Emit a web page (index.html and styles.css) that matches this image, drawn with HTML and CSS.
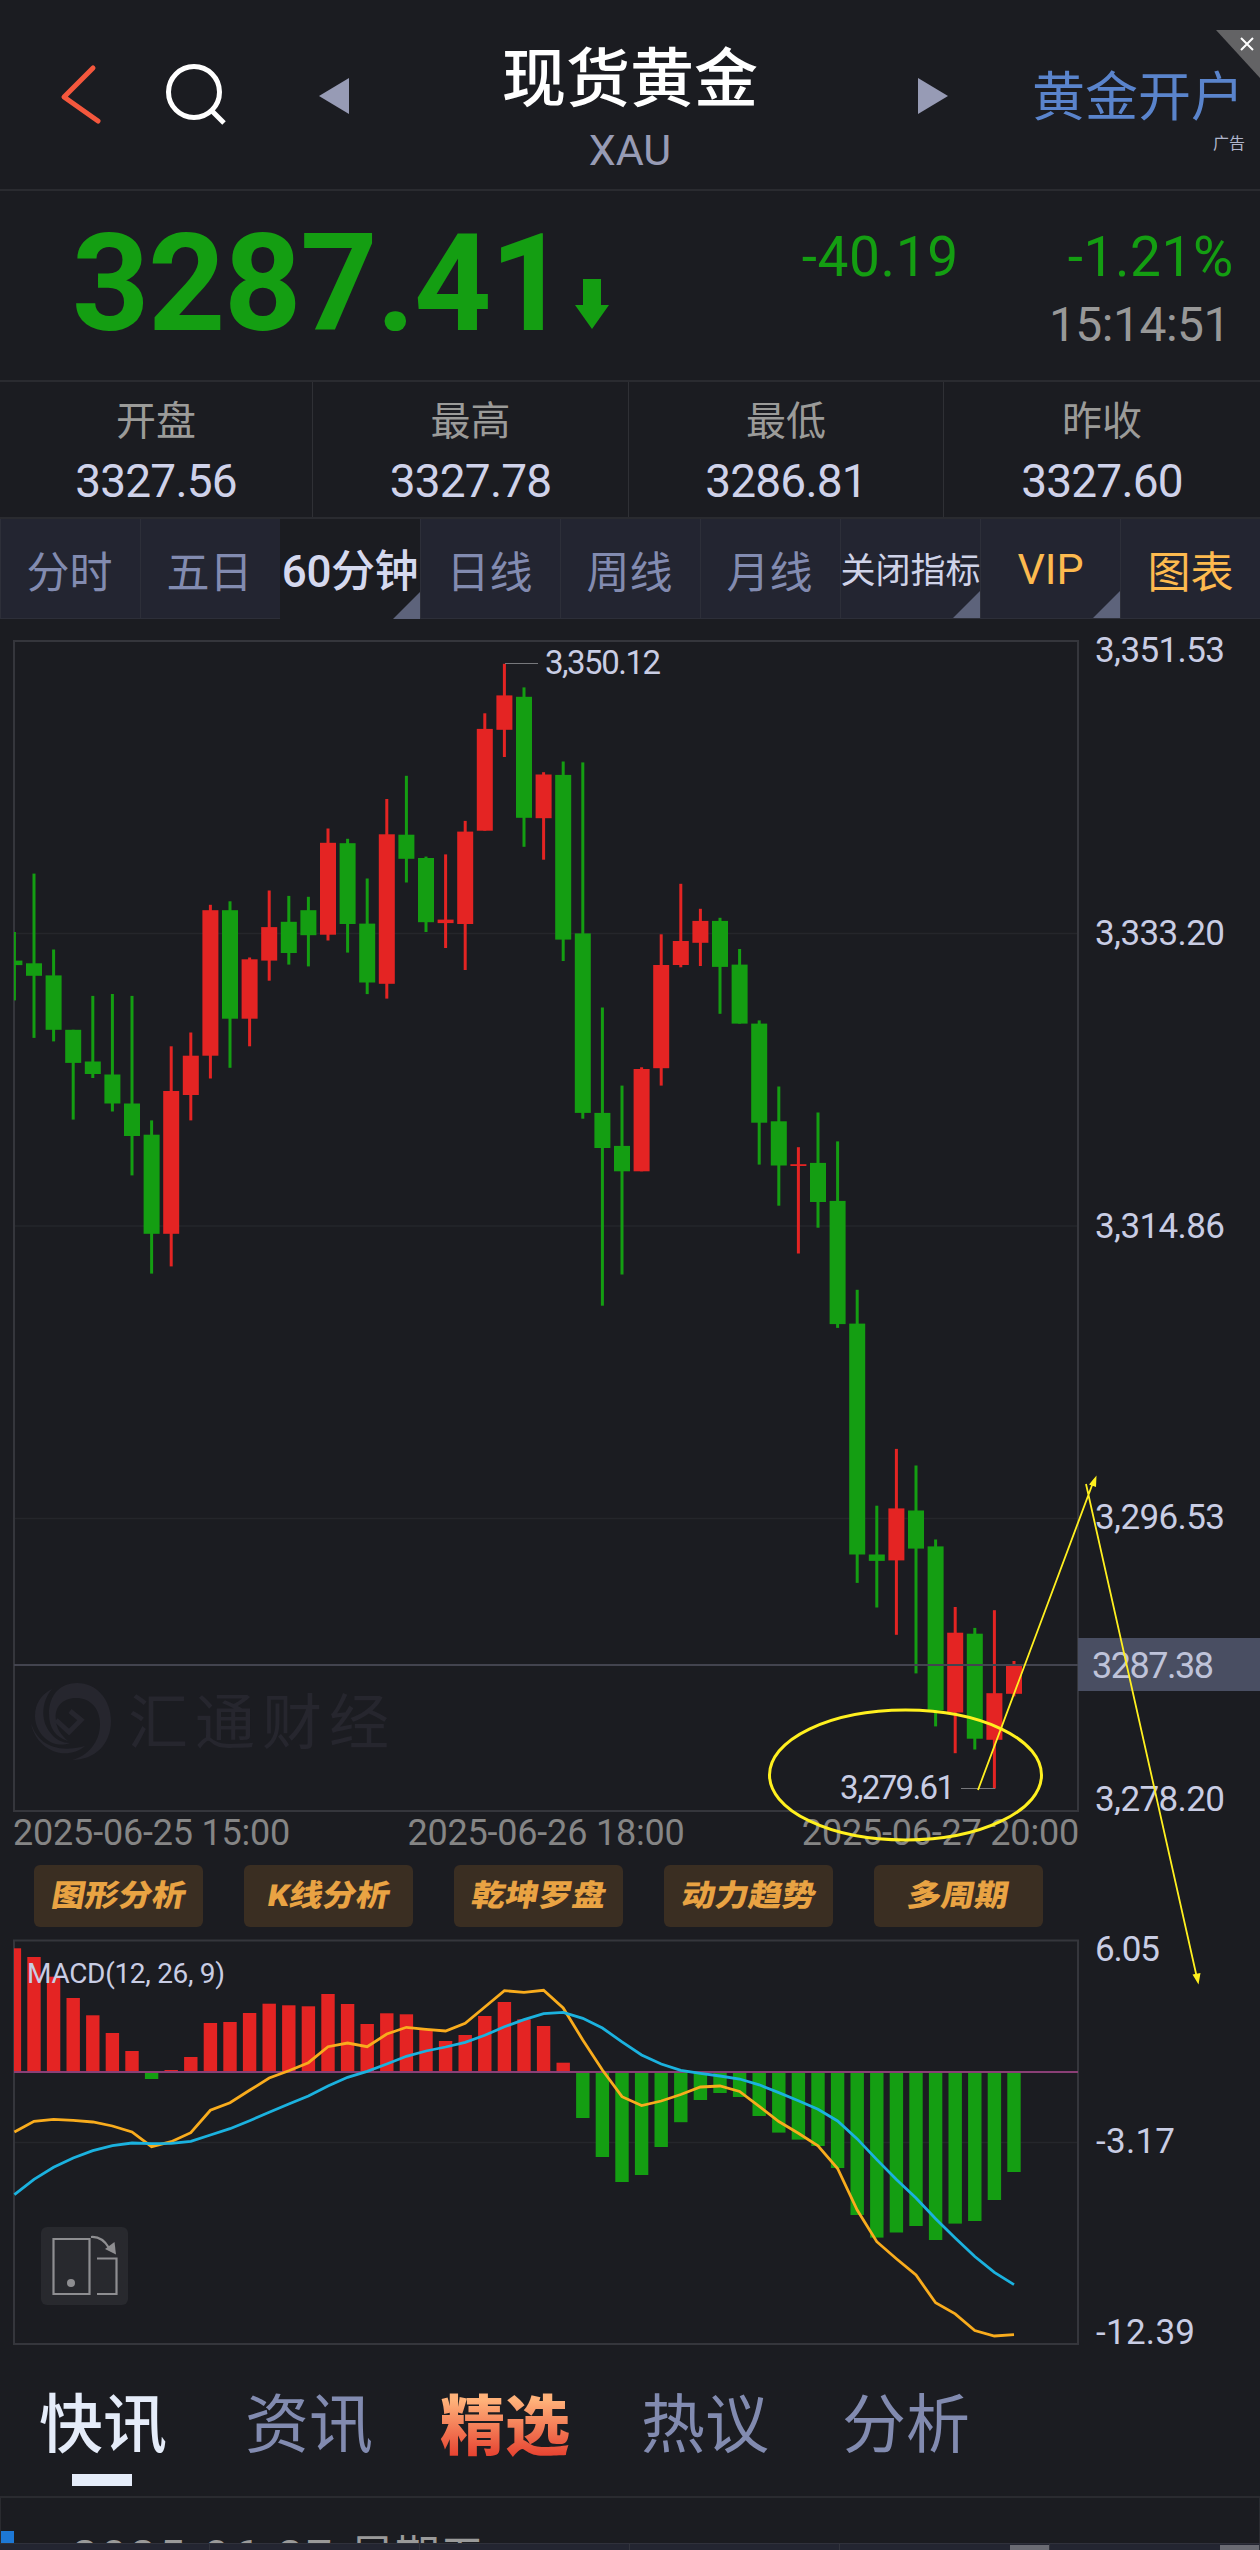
FILE: index.html
```html
<!DOCTYPE html>
<html lang="zh-CN">
<head>
    <meta charset="UTF-8">
    <meta name="viewport" content="width=device-width, initial-scale=1.0">
    <title>现货黄金 XAU</title>
    <link rel="stylesheet" href="styles.css">
</head>
<body>
    <div class="page">
        <header class="header">
            <div class="header-side">
                <svg class="icon-back" width="44" height="62" viewBox="59 65 44 62"><path d="M93 69L64 98L98 122"/></svg>
                <svg class="icon-search" width="66" height="66" viewBox="162 62 66 66"><circle cx="193" cy="92" r="25.5"/><path d="M211 111L223 123"/></svg>
                <svg class="icon-arrow" width="30" height="36"><path d="M30 0V36L0 18Z"/></svg>
            </div>
            <div class="header-title">
                <h1>现货黄金</h1>
                <p>XAU</p>
            </div>
            <div class="header-side right">
                <svg class="icon-arrow" width="30" height="36"><path d="M0 0V36L30 18Z"/></svg>
                <a class="open-account">黄金开户</a>
            </div>
            <span class="ad-label">广告</span>
            <svg class="ad-close" width="44" height="48"><path class="ad-bg" d="M0 0H44V48Z"/><path class="ad-x" d="M25 8L37 20M37 8L25 20"/></svg>
        </header>

        <section class="quote">
            <div class="price">3287.41</div>
            <svg class="down-arrow" width="34" height="50"><path d="M8 0H26V26H34L17 50L0 26H8Z"/></svg>
            <div class="change">
                <div class="change-row"><span class="diff">-40.19</span><span class="pct">-1.21%</span></div>
                <div class="time">15:14:51</div>
            </div>
        </section>

        <section class="ohlc">
            <div><span>开盘</span><b>3327.56</b></div>
            <div><span>最高</span><b>3327.78</b></div>
            <div><span>最低</span><b>3286.81</b></div>
            <div><span>昨收</span><b>3327.60</b></div>
        </section>

        <nav class="periods">
            <a>分时</a>
            <a>五日</a>
            <a class="active more">60分钟</a>
            <a>日线</a>
            <a>周线</a>
            <a>月线</a>
            <a class="small more">关闭指标</a>
            <a class="gold more">VIP</a>
            <a class="gold">图表</a>
        </nav>

        <svg class="chart" id="kline" width="1260" height="1196" viewBox="0 619 1260 1196">
            <g class="grid">
                <path d="M14 933.5H1078M14 1226H1078M14 1518.5H1078"/>
            </g>
            <rect class="frame" x="14" y="641" width="1064" height="1170"/>
            <g class="watermark">
                <path d="M49 1714C49 1694 61 1683 77 1683C97 1683 111 1700 111 1721C111 1744 95 1760 72 1760C88 1756 100 1742 100 1724C100 1708 90 1698 76 1698C62 1698 54 1708 56 1720C56 1728 61 1735 68 1741C55 1737 49 1727 49 1714Z"/>
                <path d="M52 1689C41 1702 41 1720 49 1731C55 1740 63 1743 70 1743C51 1750 35 1733 35 1716C35 1703 42 1694 52 1689Z"/>
                <path d="M31 1723C37 1743 55 1754 85 1746C76 1754 63 1755 53 1751C41 1746 33 1735 31 1723Z"/>
                <path class="mark-line" d="M70 1711L81 1720L69 1732L56 1720"/>
                <text x="128" y="1744">汇通财经</text>
            </g>
            <g id="candles"></g>
            <path class="last-line" d="M14 1665H1078"/>
            <path class="leader" d="M505 663.5H538M961 1788.5H995"/>
            <text class="mark-text" x="545" y="674" textLength="116">3,350.12</text>
            <text class="mark-text" x="840" y="1799" textLength="115">3,279.61</text>
            <g class="axis">
                <text x="1095" y="662" textLength="130">3,351.53</text>
                <text x="1095" y="945" textLength="130">3,333.20</text>
                <text x="1095" y="1237.5" textLength="130">3,314.86</text>
                <text x="1095" y="1529" textLength="130">3,296.53</text>
                <text x="1095" y="1811" textLength="130">3,278.20</text>
            </g>
            <rect class="last-box" x="1078" y="1638" width="182" height="53"/>
            <text class="last-text" x="1092" y="1677.5" textLength="122">3287.38</text>
        </svg>

        <div class="dates">
            <span>2025-06-25 15:00</span>
            <span>2025-06-26 18:00</span>
            <span>2025-06-27 20:00</span>
        </div>

        <div class="tools">
            <a><span>图形分析</span></a>
            <a><span>K线分析</span></a>
            <a><span>乾坤罗盘</span></a>
            <a><span>动力趋势</span></a>
            <a><span>多周期</span></a>
        </div>

        <svg class="chart" id="macd" width="1260" height="433" viewBox="0 1927 1260 433">
            <g class="grid"><path d="M14 2142.5H1078"/></g>
            <rect class="frame" x="14" y="1940.5" width="1064" height="403.5"/>
            <g id="bars"></g>
            <path class="zero" d="M14 2072H1078"/>
            <polyline id="dif" class="dif"/>
            <polyline id="dea" class="dea"/>
            <text class="macd-text" x="27" y="1982.5" textLength="198">MACD(12, 26, 9)</text>
            <g class="axis">
                <text x="1095" y="1961" textLength="65">6.05</text>
                <text x="1096" y="2153" textLength="79">-3.17</text>
                <text x="1096" y="2344" textLength="99">-12.39</text>
            </g>
            <g class="rotate">
                <rect class="rotate-bg" x="41" y="2227" width="87" height="78" rx="6"/>
                <path d="M53.5 2239H89.5V2294H53.5ZM97 2258.5H116.5V2294H97M91 2237Q102 2236 109 2248"/>
                <circle cx="71" cy="2283" r="4"/>
                <path class="rotate-head" d="M105 2249L114.5 2242L116 2254.5Z"/>
            </g>
        </svg>

        <nav class="news-tabs">
            <a class="active">快讯</a>
            <a>资讯</a>
            <a class="hot">精选</a>
            <a>热议</a>
            <a>分析</a>
        </nav>

        <section class="news">
            <i></i>
            <span class="news-date">2025-06-27 <em>星期五</em></span>
        </section>

        <footer class="bottom-bar">
            <div></div><div></div><div></div><div></div>
            <div><i></i></div>
            <div><i></i></div>
        </footer>

        <svg class="drawing" width="1260" height="2550">
            <ellipse cx="905.5" cy="1775" rx="136" ry="65"/>
            <path class="line" d="M978 1790L1094 1480M1086 1484L1197 1978"/>
            <path class="head" d="M1096.5 1475.5L1089 1484.5L1096 1487ZM1198.5 1984.5L1192.5 1974.5L1200.5 1973Z"/>
        </svg>
    </div>

    <script>
        const STEP = 19.6;
        const START = 14.4;
        const NS = "http://www.w3.org/2000/svg";

        // [direction, body top, body bottom, high, low]
        const candles = [
            ["g", 960.6, 965.1, 932, 1000.4], ["g", 963.3, 975.8, 873.6, 1037.9], ["g", 975.4, 1029.8, 949.5, 1041.4],
            ["g", 1029.8, 1062.9, 1029.8, 1119.6], ["g", 1061.5, 1074, 995.9, 1078], ["g", 1074.5, 1103.5, 994, 1111.5],
            ["g", 1103.5, 1136, 995.9, 1175.4], ["g", 1134.7, 1233.8, 1120.4, 1273.6], ["r", 1091, 1233.8, 1046.3, 1266.4],
            ["r", 1055.7, 1095, 1032.5, 1120.4], ["r", 910.2, 1055.7, 904.8, 1078.5], ["g", 910.2, 1018.7, 901.3, 1067.8],
            ["r", 959.3, 1018.7, 957.5, 1046.3], ["r", 927.1, 960.6, 890.5, 980.7], ["g", 921.8, 953, 895.9, 964.6],
            ["g", 910.2, 935.2, 896.8, 966.4], ["r", 842.8, 934.7, 828.5, 940.5], ["g", 843.2, 924, 838.8, 952.6],
            ["g", 923.6, 982.5, 878.5, 994.1], ["r", 834.3, 983.8, 799, 998.6], ["g", 834.7, 858.8, 775.8, 882.5],
            ["g", 858, 922.2, 856.6, 932], ["r", 919.6, 923.1, 854.4, 948], ["r", 831.6, 924, 820.9, 970],
            ["r", 728.9, 830.7, 713.3, 830.7], ["r", 695.4, 729.8, 663.8, 757], ["g", 696.8, 817.8, 687.4, 846.8],
            ["r", 774.5, 818.2, 772.2, 859.7], ["g", 774.9, 939.6, 761.5, 961], ["g", 933.4, 1112.9, 762.4, 1118.7],
            ["g", 1112.9, 1148, 1007.5, 1305.7], ["g", 1145.9, 1171.3, 1085.6, 1274.5], ["r", 1069, 1171.3, 1067.3, 1171.3],
            ["r", 965, 1068.2, 934.3, 1085.6], ["r", 941, 965, 883.8, 967.3], ["r", 920.9, 942.8, 908.8, 966],
            ["g", 920.9, 966.9, 917.8, 1013.8], ["g", 964.6, 1023.6, 949, 1023.6], ["g", 1023.6, 1122.7, 1020.4, 1164.6],
            ["g", 1121.3, 1165.5, 1086.5, 1205.7], ["r", 1164.2, 1166, 1147.2, 1253.5], ["g", 1162.9, 1202, 1112.5, 1227.7],
            ["g", 1200.9, 1324.1, 1141.4, 1327.9], ["g", 1323.6, 1554.5, 1289.8, 1582.9], ["g", 1554.5, 1560.9, 1505.7, 1607.5],
            ["r", 1508.4, 1560.4, 1448.9, 1634.8], ["g", 1510.5, 1548.6, 1465.5, 1673.4], ["g", 1546.4, 1710.4, 1539.5, 1726.4],
            ["r", 1632.7, 1712.5, 1607, 1753.2], ["g", 1633.7, 1738.7, 1627.9, 1749.5], ["r", 1693.2, 1739.8, 1610.2, 1788.6],
            ["r", 1665.9, 1693.8, 1661, 1696.4]
        ];

        const bars = [1948.3, 1957, 1976.7, 1998, 2015.3, 2033, 2051, 2079, 2070, 2057, 2023, 2022, 2013,
            2003.7, 2005.3, 2006.3, 1994, 2004, 2024, 2013.3, 2014.3, 2030, 2041, 2035, 2016, 2002,
            2019.3, 2026, 2062.7, 2118, 2157, 2182, 2175, 2147, 2122.2, 2100, 2093, 2097, 2116,
            2132.6, 2139.6, 2146, 2168, 2215, 2237.6, 2232.5, 2226, 2240, 2223.6, 2221, 2200, 2172];

        const dif = [2132, 2121.3, 2119.3, 2120.3, 2122, 2126, 2132, 2146.7, 2141.7, 2132.7, 2110.3, 2102.7, 2090.3,
            2078, 2070.7, 2062.7, 2046.7, 2043, 2046.7, 2034, 2027.3, 2029.3, 2031, 2023.3, 2007, 1990.7,
            1992.3, 1990.3, 2008, 2040, 2070, 2096.7, 2105.6, 2101, 2094.5, 2087, 2086, 2091.5, 2106.3,
            2121.5, 2133.3, 2145.9, 2168.5, 2210, 2241.7, 2258.7, 2275, 2302.8, 2313.9, 2330.5, 2336, 2334.6];

        const dea = [2194.7, 2179.3, 2167.3, 2158, 2150.7, 2145.7, 2143, 2143.7, 2143.3, 2141.3, 2135, 2128.7, 2120.7,
            2112.3, 2104, 2096, 2086, 2077.3, 2071.3, 2064, 2056.3, 2051, 2047, 2042.3, 2035.3, 2026.7,
            2019.7, 2013.7, 2012.3, 2018.3, 2028, 2041.9, 2054.9, 2064, 2070.4, 2073.4, 2076, 2079, 2084.8,
            2092.6, 2100.8, 2109.3, 2121, 2138.9, 2159.6, 2179.6, 2198, 2218.8, 2238, 2256.5, 2272.4, 2284.6];

        function addRect(parent, cls, x, y, w, h) {
            // nothing is drawn left of the frame
            if (x < 14) {
                w -= 14 - x;
                x = 14;
            }
            const rect = document.createElementNS(NS, "rect");
            rect.setAttribute("class", cls);
            rect.setAttribute("x", x);
            rect.setAttribute("y", y);
            rect.setAttribute("width", w);
            rect.setAttribute("height", h);
            parent.appendChild(rect);
        }

        const candleGroup = document.getElementById("candles");
        candles.forEach(([dir, top, bottom, high, low], i) => {
            const x = START + i * STEP;
            addRect(candleGroup, dir, x - 1.5, high, 3, low - high);
            addRect(candleGroup, dir, x - 8, top, 16, bottom - top);
        });

        const barGroup = document.getElementById("bars");
        bars.forEach((y, i) => {
            const x = START + i * STEP - 6.7;
            if (y < 2072) {
                addRect(barGroup, "r", x, y, 13.4, 2073 - y);
            } else {
                addRect(barGroup, "g", x, 2072, 13.4, y - 2072);
            }
        });

        function toPoints(list) {
            return list.map((y, i) => (START + i * STEP).toFixed(1) + "," + y).join(" ");
        }
        document.getElementById("dif").setAttribute("points", toPoints(dif));
        document.getElementById("dea").setAttribute("points", toPoints(dea));
    </script>
</body>
</html>
```

FILE: styles.css
```css
* {
    margin: 0;
    padding: 0;
    box-sizing: border-box;
}

body {
    background: #1b1c21;
    color: #c9cde4;
    font-family: Roboto, "Noto Sans CJK SC", sans-serif;
}

.page {
    position: relative;
    width: 1260px;
    height: 2550px;
    overflow: hidden;
}

svg {
    display: block;
}

/* Header */
.header {
    position: relative;
    height: 191px;
    display: flex;
    justify-content: space-between;
    border-bottom: 2px solid #2a2b30;
}

.header-side {
    width: 360px;
    height: 191px;
    padding: 0 0 0 59px;
    display: flex;
    align-items: center;
}

.header-side.right {
    padding: 0 16px 0 0;
    justify-content: flex-end;
}

.icon-back {
    fill: none;
    stroke: #f4573d;
    stroke-width: 5;
    stroke-linecap: round;
    stroke-linejoin: round;
    align-self: flex-start;
    margin-top: 64px;
}

.icon-search {
    fill: none;
    stroke: #fff;
    stroke-width: 5;
    align-self: flex-start;
    margin: 62px 0 0 60px;
}

.icon-arrow {
    fill: #979bb5;
}

.header-side .icon-arrow {
    margin-left: 90px;
}

.header-side.right .icon-arrow {
    margin: 0 84px 0 0;
}

.header-title {
    text-align: center;
    padding-top: 42px;
}

.header-title h1 {
    font-size: 64px;
    font-weight: 500;
    line-height: 76px;
    color: #fff;
}

.header-title p {
    font-size: 43px;
    line-height: 64px;
    color: #979bb5;
}

.open-account {
    font-size: 53px;
    line-height: 80px;
    padding-top: 4px;
    color: #5a84cc;
    white-space: nowrap;
}

.ad-label {
    position: absolute;
    right: 15px;
    top: 132px;
    font-size: 16px;
    line-height: 24px;
    color: #b0b5cc;
}

.ad-close {
    position: absolute;
    right: 0;
    top: 30px;
}

.ad-bg {
    fill: #636365;
}

.ad-x {
    stroke: #fff;
    stroke-width: 2;
}

/* Price */
.quote {
    height: 191px;
    display: flex;
    padding-left: 72px;
    border-bottom: 2px solid #2a2b30;
    color: #149e12;
}

.price {
    width: 503px;
    font-size: 135px;
    font-weight: 700;
    line-height: 186px;
    letter-spacing: -1.4px;
}

.down-arrow {
    fill: #149e12;
    margin-top: 88px;
}

.change {
    flex: 1;
    padding: 34px 26px 0 0;
    text-align: right;
}

.change-row {
    display: flex;
    justify-content: flex-end;
    gap: 109px;
    font-size: 55px;
    line-height: 64px;
    letter-spacing: 0.6px;
}

.time {
    color: #989898;
    font-size: 48px;
    line-height: 72px;
    letter-spacing: -0.5px;
    padding-right: 4px;
}

/* Open, high, low, close */
.ohlc {
    height: 137px;
    display: grid;
    grid-template-columns: 313px 316px 315px 316px;
    border-bottom: 2px solid #2a2b30;
}

.ohlc div {
    display: flex;
    flex-direction: column;
    align-items: center;
    padding-top: 13px;
    border-right: 1px solid #2f3035;
}

.ohlc div:last-child {
    border-right: none;
}

.ohlc span {
    font-size: 40px;
    line-height: 54px;
    color: #9b9b99;
}

.ohlc b {
    font-size: 46px;
    font-weight: 400;
    line-height: 64px;
    letter-spacing: -0.8px;
    color: #cfd2ea;
}

/* Periods */
.periods {
    height: 100px;
    display: grid;
    grid-template-columns: repeat(9, 140px);
    background: #232531;
}

.periods a {
    position: relative;
    display: flex;
    align-items: center;
    justify-content: center;
    padding-right: 2px;
    border-left: 1px solid #2d2f39;
    border-bottom: 1px solid #2d2f39;
    font-size: 43px;
    color: #828bb0;
    white-space: nowrap;
}

.periods a.active {
    background: #1b1c21;
    color: #d5d9ef;
    font-size: 44px;
    font-weight: 500;
    letter-spacing: -0.4px;
    padding: 0 0 3px;
    border: none;
}

.periods a.small {
    font-size: 35px;
    padding: 0 0 2px;
    color: #cfd3e8;
}

.periods a.gold {
    padding: 0;
    color: #fdba4f;
}

.periods a.more::after {
    content: "";
    position: absolute;
    right: 0;
    bottom: 0;
    border-left: 27px solid transparent;
    border-bottom: 27px solid #5d637b;
}

/* Charts */
.r {
    fill: #e42423;
}

.g {
    fill: #149e12;
}

.grid path {
    stroke: #25262b;
    stroke-width: 1.5;
}

.frame {
    fill: none;
    stroke: #35363c;
    stroke-width: 2;
}

.last-line {
    stroke: #43444f;
    stroke-width: 2;
}

.leader {
    stroke: #77787c;
    stroke-width: 1;
}

.axis text {
    font-size: 35px;
    fill: #c9cde4;
}

.mark-text {
    font-size: 33px;
    fill: #c9cde4;
}

.last-box {
    fill: #494e62;
}

.last-text {
    font-size: 36px;
    fill: #bfc3d9;
}

.watermark {
    fill: #26262e;
}

.watermark text {
    font-size: 60px;
    letter-spacing: 7px;
}

.mark-line {
    fill: none;
    stroke: #26262e;
    stroke-width: 5;
}

.dates {
    width: 1080px;
    height: 50px;
    padding: 0 1px 0 13px;
    display: flex;
    justify-content: space-between;
    font-size: 36px;
    line-height: 37px;
    letter-spacing: -0.2px;
    color: #858585;
}

.tools {
    display: flex;
    gap: 41px;
    padding-left: 34px;
    height: 62px;
}

.tools a {
    width: 169px;
    height: 62px;
    border-radius: 6px;
    background: #3a2e22;
    display: flex;
    align-items: center;
    justify-content: center;
}

.tools span {
    font-size: 33.5px;
    font-weight: 900;
    line-height: 40px;
    color: #e9a343;
    transform: skewX(-10deg) scaleY(0.9);
}

.zero {
    stroke: #8a3f76;
    stroke-width: 2;
}

.dif,
.dea {
    fill: none;
    stroke: #f9ac1d;
    stroke-width: 2.8;
}

.dea {
    stroke: #1bb2df;
}

.macd-text {
    font-size: 28px;
    fill: #c9cde4;
}

.rotate path {
    fill: none;
    stroke: #8e8e91;
    stroke-width: 2.2;
}

.rotate circle,
.rotate .rotate-head {
    fill: #8e8e91;
    stroke: none;
}

.rotate-bg {
    fill: #28292e;
}

/* News */
.news-tabs {
    height: 138px;
    display: flex;
    gap: 75px;
    padding: 21px 0 0 39px;
    border-bottom: 2px solid #2a2b30;
}

.news-tabs a {
    position: relative;
    width: 126px;
    font-size: 64px;
    line-height: 90px;
    color: #828bb0;
    white-space: nowrap;
}

.news-tabs a:nth-child(2) {
    margin-left: 5px;
}

.news-tabs a.active {
    color: #e5ecf9;
    font-weight: 500;
}

.news-tabs a.active::after {
    content: "";
    position: absolute;
    left: 33px;
    bottom: 10px;
    width: 60px;
    height: 12px;
    background: #e5ecf9;
}

.news-tabs a.hot {
    width: 130px;
    margin: 1px -4px 0 -6px;
    font-size: 65px;
    font-weight: 900;
    background: linear-gradient(#ffb27a 16%, #e6402f 66%);
    background-clip: text;
    -webkit-background-clip: text;
    color: transparent;
}

.news {
    height: 45px;
    overflow: hidden;
    display: flex;
    border-left: 1px solid #2a2b30;
    border-right: 1px solid #2a2b30;
}

.news i {
    width: 13px;
    height: 12px;
    margin-top: 33px;
    background: #1d78d6;
}

.news-date {
    margin: 27px 0 0 58px;
    font-size: 46px;
    line-height: 64px;
    letter-spacing: 3.1px;
    color: #9a9a9a;
    white-space: nowrap;
}

.news-date em {
    font-size: 45px;
    font-style: normal;
    letter-spacing: 0;
}

.bottom-bar {
    height: 7px;
    display: grid;
    grid-template-columns: repeat(6, 1fr);
    background: #232531;
    border-top: 1px solid #2f313b;
}

.bottom-bar div {
    border-right: 1px solid #32343e;
    display: flex;
    justify-content: flex-end;
}

.bottom-bar i {
    width: 39px;
    height: 5px;
    margin-top: 1px;
    background: #6a6b73;
}

/* Hand-drawn marks over the charts */
.drawing {
    position: absolute;
    left: 0;
    top: 0;
    fill: none;
    stroke: #fff01f;
    stroke-width: 3;
    pointer-events: none;
}

.drawing .line {
    stroke-width: 1.8;
}

.drawing .head {
    fill: #fff01f;
    stroke: none;
}
```
